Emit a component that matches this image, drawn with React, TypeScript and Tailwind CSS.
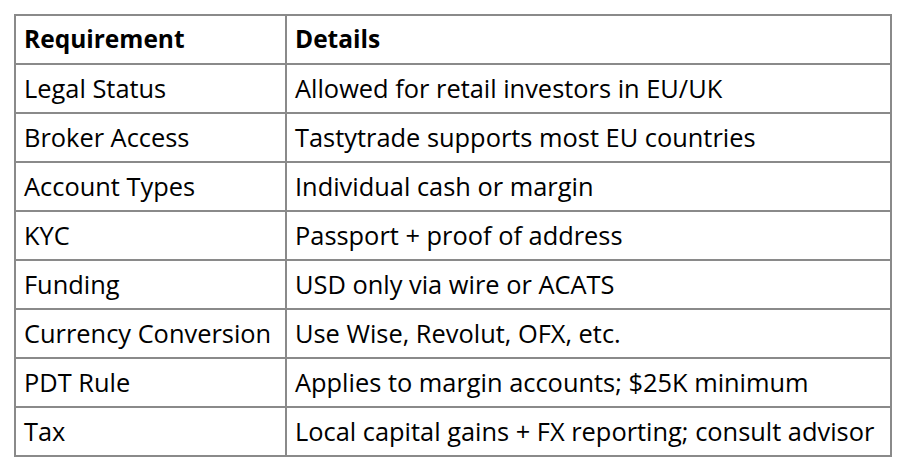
const rows: [string, string][] = [
  ["Legal Status", "Allowed for retail investors in EU/UK"],
  ["Broker Access", "Tastytrade supports most EU countries"],
  ["Account Types", "Individual cash or margin"],
  ["KYC", "Passport + proof of address"],
  ["Funding", "USD only via wire or ACATS"],
  ["Currency Conversion", "Use Wise, Revolut, OFX, etc."],
  ["PDT Rule", "Applies to margin accounts; $25K minimum"],
  ["Tax", "Local capital gains + FX reporting; consult advisor"],
];

export default function App() {
  return (
    <div className="w-[900px] h-[470px] bg-white pt-[14px] pl-[14px] font-['Open_Sans',sans-serif] text-black">
      <table className="border-collapse border-2 border-[#8a8a8a] text-[25.4px] leading-none">
        <thead>
          <tr className="h-[49px] text-[24.5px]">
            <th className="w-[271px] border-2 border-[#8a8a8a] pl-[8px] text-left font-bold">
              Requirement
            </th>
            <th className="w-[605px] border-2 border-[#8a8a8a] pl-[8px] text-left font-bold">
              Details
            </th>
          </tr>
        </thead>
        <tbody>
          {rows.map(([req, det]) => (
            <tr key={req} className="h-[49px]">
              <td className="border-2 border-[#8a8a8a] pl-[8px]">{req}</td>
              <td className="border-2 border-[#8a8a8a] pl-[8px]">{det}</td>
            </tr>
          ))}
        </tbody>
      </table>
    </div>
  );
}
